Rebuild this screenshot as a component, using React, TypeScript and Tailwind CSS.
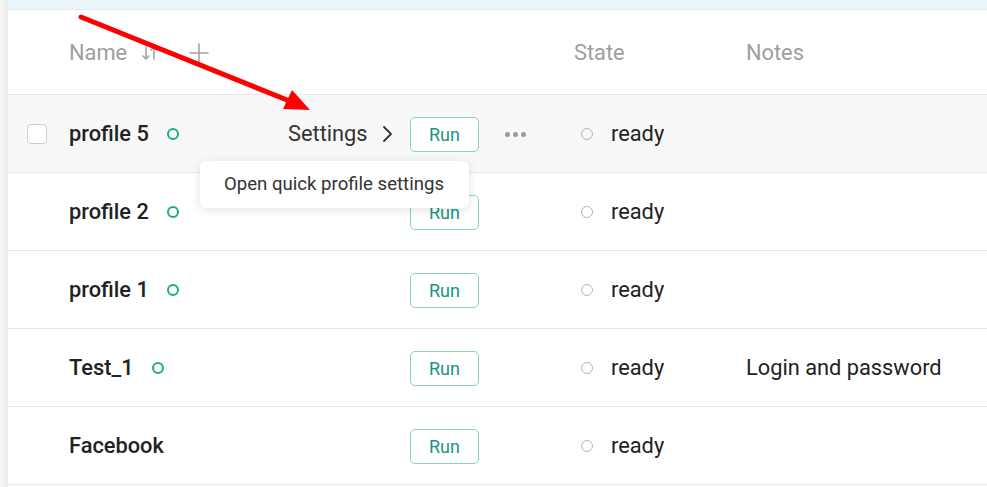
import React from "react";

type Row = {
  name: string;
  online: boolean;
  notes?: string;
  hover?: boolean;
};

const rows: Row[] = [
  { name: "profile 5", online: true, hover: true },
  { name: "profile 2", online: true },
  { name: "profile 1", online: true },
  { name: "Test_1", online: true, notes: "Login and password" },
  { name: "Facebook", online: false },
];

function SortIcon() {
  return (
    <svg width="18" height="18" viewBox="0 0 18 18" fill="none" stroke="#a3a3a3" strokeWidth="1.6" strokeLinecap="round" strokeLinejoin="round">
      <path d="M5 3v12M2 12l3 3 3-3" />
      <path d="M13 15V3M10 6l3-3 3 3" />
    </svg>
  );
}

function PlusIcon() {
  return (
    <svg width="20" height="20" viewBox="0 0 20 20" fill="none" stroke="#a3a3a3" strokeWidth="1.6" strokeLinecap="round">
      <path d="M10 1v18M1 10h18" />
    </svg>
  );
}

export default function App() {
  return (
    <div className="flex h-[487px] w-[987px] overflow-hidden bg-white" style={{ fontFamily: "Roboto, 'Noto Sans', sans-serif" }}>
      <div className="w-[8px] shrink-0 bg-gradient-to-r from-[#f8f8f8] to-[#ebebeb]" />
      <div className="relative flex-1">
        <div className="h-[10px] border-b border-[#e3e8ec] bg-[#eaf5fc]" />

        {/* header */}
        <div className="flex h-[85px] items-center border-b border-[#e6e6e6] pt-[2px] text-[21.8px] text-[#9e9e9e]">
          <div className="w-[61px] shrink-0" />
          <div className="flex w-[505px] shrink-0 items-center">
            <span>Name</span>
            <span className="ml-[14px]"><SortIcon /></span>
            <span className="ml-[30px]"><PlusIcon /></span>
          </div>
          <div className="w-[172px] shrink-0">State</div>
          <div>Notes</div>
        </div>

        {rows.map((r) => (
          <div
            key={r.name}
            className={`flex h-[78px] items-center border-b border-[#e6e6e6] pt-[1px] ${r.hover ? "bg-[#f8f8f8]" : "bg-white"}`}
          >
            <div className="w-[61px] shrink-0 pl-[19px]">
              {r.hover && <div className="h-[20px] w-[20px] rounded-[4px] border border-[#cfcfcf] bg-white" />}
            </div>
            <div className="flex w-[219px] shrink-0 items-center">
              <span className="text-[21.8px] font-medium text-[#222]">{r.name}</span>
              {r.online && <span className="ml-[18px] h-[12px] w-[12px] rounded-full border-2 border-[#1aab8a]" />}
            </div>
            <div className="flex w-[286px] shrink-0 items-center">
              <div className="flex w-[122px] items-center">
                {r.hover && (
                  <>
                    <span className="text-[21.8px] text-[#333]">Settings</span>
                    <svg className="ml-[12px]" width="14" height="18" viewBox="0 0 14 18" fill="none" stroke="#333" strokeWidth="1.8" strokeLinecap="round" strokeLinejoin="round">
                      <path d="M4 2l7 7-7 7" />
                    </svg>
                  </>
                )}
              </div>
              <button className="flex h-[35px] w-[69px] items-center justify-center rounded-[5px] border border-[#86d3c2] bg-white text-[18px] text-[#16977e]">
                Run
              </button>
              {r.hover && (
                <div className="ml-[26px] flex gap-[3px]">
                  <span className="h-[5px] w-[5px] rounded-full bg-[#9a9a9a]" />
                  <span className="h-[5px] w-[5px] rounded-full bg-[#9a9a9a]" />
                  <span className="h-[5px] w-[5px] rounded-full bg-[#9a9a9a]" />
                </div>
              )}
            </div>
            <div className="flex w-[172px] shrink-0 items-center pl-[7px]">
              <span className="h-[12px] w-[12px] rounded-full border-[1.5px] border-[#b5b5b5]" />
              <span className="ml-[18px] text-[21.8px] text-[#222]">ready</span>
            </div>
            <div className="text-[21.8px] text-[#222]">{r.notes}</div>
          </div>
        ))}

        {/* tooltip */}
        <div className="absolute left-[192px] top-[161px] flex h-[47px] w-[269px] items-center rounded-[6px] bg-white pl-[24px] text-[18.6px] text-[#333] shadow-[0_2px_10px_rgba(0,0,0,0.12)]">
          Open quick profile settings
        </div>
      </div>

      {/* annotation arrow */}
      <svg className="pointer-events-none absolute left-0 top-0" width="987" height="487">
        <line x1="81" y1="17" x2="292" y2="102" stroke="#ff0000" strokeWidth="5" strokeLinecap="round" />
        <polygon points="310,110 283,109 292,90" fill="#ff0000" />
      </svg>
    </div>
  );
}
